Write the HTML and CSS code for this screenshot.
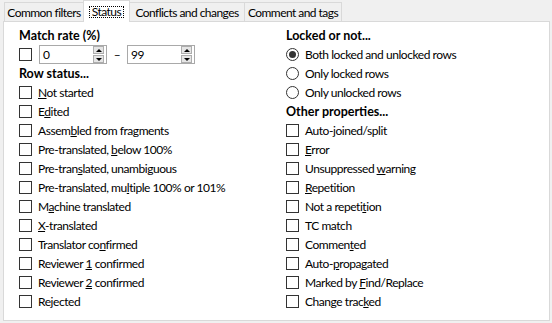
FILE: index.html
```html
<!DOCTYPE html>
<html>
<head>
    <title>Filter - Status</title>
    <link rel="stylesheet" href="styles.css">
</head>
<body>
    <!-- Tab headers -->
    <div class="tab-strip">
        <div class="tab tab-common">Common filters</div>
        <div class="tab tab-status selected"><span class="focus">Status</span></div>
        <div class="tab tab-conflicts">Conflicts and changes</div>
        <div class="tab tab-comment">Comment and tags</div>
    </div>

    <!-- Status page -->
    <div class="tab-page">
        <div class="col">
            <div class="heading">Match rate (%)</div>
            <div class="row match-row">
                <span class="check"></span>
                <div class="spin">
                    <span class="spin-value">0</span>
                    <span class="spin-buttons"><span class="spin-up"></span><span class="spin-down"></span></span>
                </div>
                <span class="dash">–</span>
                <div class="spin">
                    <span class="spin-value">99</span>
                    <span class="spin-buttons"><span class="spin-up"></span><span class="spin-down"></span></span>
                </div>
            </div>
            <div class="heading">Row status...</div>
            <label class="row"><span class="check"></span><span><u>N</u>ot started</span></label>
            <label class="row"><span class="check"></span><span>E<u>d</u>ited</span></label>
            <label class="row"><span class="check"></span><span>Assem<u>b</u>led from fragments</span></label>
            <label class="row"><span class="check"></span><span>Pre-translated, <u>b</u>elow 100%</span></label>
            <label class="row"><span class="check"></span><span>Pre-tran<u>s</u>lated, unambiguous</span></label>
            <label class="row"><span class="check"></span><span>Pre-translated, mu<u>l</u>tiple 100% or 101%</span></label>
            <label class="row"><span class="check"></span><span>M<u>a</u>chine translated</span></label>
            <label class="row"><span class="check"></span><span><u>X</u>-translated</span></label>
            <label class="row"><span class="check"></span><span>Translator co<u>n</u>firmed</span></label>
            <label class="row"><span class="check"></span><span>Reviewer <u>1</u> confirmed</span></label>
            <label class="row"><span class="check"></span><span>Reviewer <u>2</u> confirmed</span></label>
            <label class="row"><span class="check"></span><span>Re<u>j</u>ected</span></label>
        </div>

        <div class="col">
            <div class="heading">Locked or not...</div>
            <label class="row"><span class="radio checked"></span><span>Both locked and unlocked rows</span></label>
            <label class="row"><span class="radio"></span><span>Only locked rows</span></label>
            <label class="row"><span class="radio"></span><span>Only unlocked rows</span></label>
            <div class="heading">Other properties...</div>
            <label class="row"><span class="check"></span><span>Auto-<u>j</u>oined/split</span></label>
            <label class="row"><span class="check"></span><span><u>E</u>rror</span></label>
            <label class="row"><span class="check"></span><span>Unsuppressed <u>w</u>arning</span></label>
            <label class="row"><span class="check"></span><span><u>R</u>epetition</span></label>
            <label class="row"><span class="check"></span><span>Not a repeti<u>t</u>ion</span></label>
            <label class="row"><span class="check"></span><span>TC match</span></label>
            <label class="row"><span class="check"></span><span>Commen<u>t</u>ed</span></label>
            <label class="row"><span class="check"></span><span>Auto-<u>p</u>ropagated</span></label>
            <label class="row"><span class="check"></span><span>Marked by <u>F</u>ind/Replace</span></label>
            <label class="row"><span class="check"></span><span>Change trac<u>k</u>ed</span></label>
        </div>
    </div>
</body>
</html>
```

FILE: styles.css
```css
/* --- Base --- */
body {
    margin: 0;
    background: #f0f0f0;
    font-family: Lato, "Liberation Sans", sans-serif;
    font-size: 12px;
    letter-spacing: -0.45px;
    color: #000;
    width: 552px;
    height: 323px;
    overflow: hidden;
}
u { text-underline-offset: 1px; }

/* --- Tabs --- */
.tab-strip { display: flex; align-items: flex-end; height: 21px; padding-left: 4px; }
.tab {
    box-sizing: border-box;
    height: 19px;
    margin-left: -1px;
    border: 1px solid #d9d9d9;
    border-bottom: none;
    background: #f0f0f0;
    display: flex;
    align-items: center;
    justify-content: center;
    white-space: nowrap;
    letter-spacing: -0.55px;
}
.tab:first-child { margin-left: 0; }
.tab-common { width: 80px; }
.tab-status { width: 47px; }
.tab-conflicts { width: 116px; }
.tab-comment { width: 98px; }
.tab.selected {
    height: 22px;
    margin-bottom: -1px;
    background: #fff;
    position: relative;
    z-index: 1;
}
.tab .focus { border: 1px dotted #000; padding: 0 2px; line-height: 10px; }

/* --- Page --- */
.tab-page {
    box-sizing: border-box;
    margin-left: 3px;
    width: 547px;
    height: 300px;
    padding: 4px 0 0 15px;
    background: #fff;
    border: 1px solid #d9d9d9;
    display: grid;
    grid-template-columns: 267px 1fr;
}
.heading { height: 19px; line-height: 19px; font-size: 12.5px; font-weight: bold; letter-spacing: 0; white-space: nowrap; }
.row { display: flex; align-items: center; height: 19px; white-space: nowrap; }

.check, .radio {
    box-sizing: border-box;
    flex: none;
    width: 13px;
    height: 13px;
    margin-right: 6px;
    border: 1px solid #333;
    background: #fff;
}
.radio { border-radius: 50%; display: flex; align-items: center; justify-content: center; }
.radio.checked::after { content: ""; width: 7px; height: 7px; border-radius: 50%; background: #333; }

/* --- Match rate spinners --- */
.match-row .check { margin-right: 7px; }
.dash { width: 20px; text-align: center; }
.spin {
    box-sizing: border-box;
    display: flex;
    width: 68px;
    height: 19px;
    border: 1px solid #a9a9a9;
    background: #fff;
}
.spin-value { flex: 1; padding-left: 3px; line-height: 17px; }
.spin-buttons { display: flex; flex-direction: column; gap: 1px; width: 11px; margin: 0 2px 0 0; }
.spin-up, .spin-down {
    flex: 1;
    box-sizing: border-box;
    border: 1px solid #adadad;
    background: #e5e5e5;
    display: flex;
    align-items: center;
    justify-content: center;
}
.spin-up::after, .spin-down::after { content: ""; border-left: 3px solid transparent; border-right: 3px solid transparent; }
.spin-up::after { border-bottom: 3px solid #000; }
.spin-down::after { border-top: 3px solid #000; }
```
